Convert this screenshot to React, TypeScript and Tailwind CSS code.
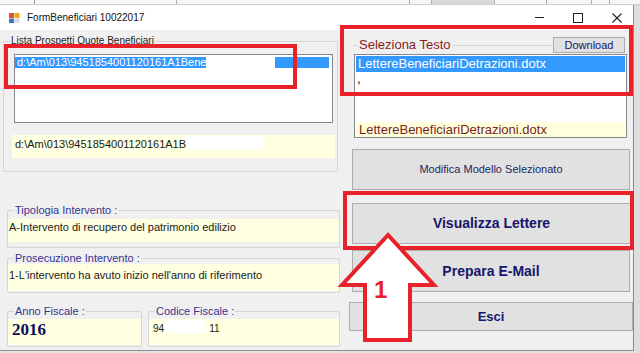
import React from 'react';

// WinForms "FormBeneficiari" window with red annotation overlay

function GroupBox({
  label,
  className,
  labelClass,
  children,
}: {
  label: string;
  className: string;
  labelClass: string;
  children: React.ReactNode;
}) {
  return (
    <fieldset className={`border border-[#d5d5d5] rounded-[2px] ${className}`}>
      <legend className={`ml-[6px] px-[1px] leading-[12px] ${labelClass}`}>{label}</legend>
      {children}
    </fieldset>
  );
}

function WinButton({ className, children }: { className: string; children: React.ReactNode }) {
  return (
    <button
      className={`flex items-center justify-center bg-[#e1e1e1] border border-[#adadad] text-[#16166a] ${className}`}
    >
      {children}
    </button>
  );
}

export default function App() {
  return (
    <div className="relative w-[640px] h-[353px] overflow-hidden bg-[#e4e4e4] font-['Liberation_Sans',Arial,sans-serif]">
      {/* background app strip */}
      <div className="h-[5px] flex bg-[#f6f6f6] border-b border-[#cfcfcf]">
        <div className="w-[35px] border-r border-[#9a9a9a]" />
        <div className="w-[142px] border-r border-[#b0b0b0]" />
        <div className="w-[233px] border-r border-[#b0b0b0]" />
        <div className="w-[22px] border-r border-[#b0b0b0]" />
        <div className="w-[63px] bg-[#dadada] border-r border-[#b0b0b0]" />
        <div className="w-[52px] border-r border-[#b0b0b0]" />
        <div className="w-[45px] border-r border-[#b0b0b0]" />
        <div className="w-[18px] border-r border-[#b0b0b0]" />
      </div>

      <div className="flex">
        <div className="w-[634px] h-[346px] flex flex-col bg-[#f0f0f0] border-r border-b border-[#8c8c8c]">
          {/* title bar */}
          <div className="h-[25px] flex items-center bg-white pl-[9px]">
            <svg width="11" height="10" viewBox="0 0 11 10">
              <rect x="0" y="0" width="5" height="5" fill="#e2522a" />
              <rect x="5.5" y="0" width="5" height="5" fill="#f2a51f" />
              <rect x="0" y="5.5" width="5" height="4.5" fill="#3a76c8" />
              <rect x="5.5" y="5.5" width="5" height="4.5" fill="#d9d9d9" />
            </svg>
            <span className="ml-[7px] text-[10px] text-[#111]">FormBeneficiari 10022017</span>
            <div className="ml-auto flex items-center gap-[29px] pr-[11px]">
              <svg width="9" height="9" viewBox="0 0 9 9">
                <line x1="0" y1="4.5" x2="9" y2="4.5" stroke="#222" strokeWidth="1" />
              </svg>
              <svg width="10" height="10" viewBox="0 0 10 10">
                <rect x="0.5" y="0.5" width="9" height="9" fill="none" stroke="#222" strokeWidth="1" />
              </svg>
              <svg width="10" height="10" viewBox="0 0 10 10">
                <path d="M0.5 0.5 L9.5 9.5 M9.5 0.5 L0.5 9.5" stroke="#222" strokeWidth="1.1" />
              </svg>
            </div>
          </div>

          <div className="flex flex-1">
            {/* left column */}
            <div className="w-[341px] flex flex-col">
              <GroupBox
                label="Lista Prospetti Quote Beneficiari"
                className="ml-[3px] mt-[5px] w-[335px] h-[137px]"
                labelClass="text-[10px] text-[#1e1e1e]"
              >
                <div className="ml-[10px] mt-[7px] w-[319px] h-[69px] border border-[#828790] bg-white pt-[2px]">
                  <div className="flex items-center h-[11px] w-[314px] bg-[#3399ff] text-white text-[11px] leading-[11px] pl-[2px]">
                    <span className="whitespace-nowrap">d:\Am\013\9451854001120161A1Bene</span>
                    <span className="w-[69px] h-[11px] bg-white" />
                  </div>
                </div>
                <div className="ml-[8px] mt-[12px] w-[323px] h-[23px] bg-[#ffffe1] flex items-start pt-[1px] pl-[3px] text-[11px] leading-[13px] text-[#1a1a1a]">
                  <span className="whitespace-nowrap pt-[2px]">d:\Am\013\9451854001120161A1B</span>
                  <span className="w-[78px] h-[13px] bg-white" />
                </div>
              </GroupBox>

              <GroupBox
                label="Tipologia Intervento :"
                className="ml-[7px] mt-[32px] w-[333px] pb-[5px]"
                labelClass="text-[11px] text-[#35358f]"
              >
                <div className="mt-[3px] h-[23px] bg-[#ffffe1] pl-[1px] pt-[2px] text-[11px] leading-[13px] text-[#1a1a1a]">
                  A-Intervento di recupero del patrimonio edilizio
                </div>
              </GroupBox>

              <GroupBox
                label="Prosecuzione Intervento :"
                className="ml-[7px] mt-[4px] w-[333px] pb-[1px]"
                labelClass="text-[11px] text-[#35358f]"
              >
                <div className="h-[27px] bg-[#ffffe1] pl-[1px] pt-[5px] text-[11px] leading-[13px] text-[#1a1a1a]">
                  1-L&apos;intervento ha avuto inizio nell&apos;anno di riferimento
                </div>
              </GroupBox>

              <div className="flex mt-[12px]">
                <GroupBox
                  label="Anno Fiscale :"
                  className="ml-[7px] w-[135px] pb-[1px]"
                  labelClass="text-[11px] text-[#35358f]"
                >
                  <div className="mt-[2px] h-[26px] bg-[#ffffe1] pl-[4px] pt-[1px] text-[17px] leading-[20px] font-bold font-['Liberation_Serif',serif] text-[#0c0c5c]">
                    2016
                  </div>
                </GroupBox>
                <GroupBox
                  label="Codice Fiscale :"
                  className="ml-[6px] w-[192px] pb-[1px]"
                  labelClass="text-[11px] text-[#35358f]"
                >
                  <div className="mt-[2px] h-[26px] bg-[#ffffe1] flex items-start pl-[4px] pt-[1px] text-[10px] leading-[13px] text-[#1a1a1a]">
                    <span className="pt-[2px]">94</span>
                    <span className="ml-[1px] w-[40px] h-[13px] bg-white" />
                    <span className="ml-[4px] pt-[2px]">11</span>
                  </div>
                </GroupBox>
              </div>
            </div>

            {/* right column */}
            <div className="flex-1 flex flex-col">
              <div className="mt-[7px] ml-[12px] mr-[8px] h-[16px] flex items-center">
                <div className="w-[5px] h-px bg-[#d5d5d5]" />
                <span className="px-[1px] text-[13px] leading-[16px] text-[#8a1d1d] whitespace-nowrap">Seleziona Testo</span>
                <div className="flex-1 h-px bg-[#d5d5d5]" />
                <WinButton className="w-[72px] h-[16px] text-[11px] text-[#3b3b92]">Download</WinButton>
              </div>
              <div className="mt-[1px] ml-[13px] w-[273px] h-[84px] border border-[#828790] bg-white flex flex-col">
                <div className="mt-px mx-px h-[16px] bg-[#3399ff] text-white text-[13px] leading-[16px] pl-[2px] whitespace-nowrap">
                  LettereBeneficiariDetrazioni.dotx
                </div>
                <div className="h-[14px] text-[13px] leading-[14px] pl-[2px] text-black">,</div>
                <div className="flex-1" />
                <div className="mx-px h-[15px] bg-[#ffffdc] text-[13px] leading-[15px] pl-[3px] text-[#7a1e1e] whitespace-nowrap">
                  LettereBeneficiariDetrazioni.dotx
                </div>
              </div>
              <WinButton className="mt-[11px] ml-[11px] w-[278px] h-[41px] text-[11px] text-[#25255e]">
                Modifica Modello Selezionato
              </WinButton>
              <WinButton className="mt-[13px] ml-[11px] w-[279px] h-[41px] text-[14px] font-bold">
                Visualizza Lettere
              </WinButton>
              <WinButton className="mt-[6px] ml-[11px] w-[278px] h-[42px] text-[14px] font-bold">
                Prepara E-Mail
              </WinButton>
              <WinButton className="mt-[10px] ml-[8px] w-[284px] h-[29px] text-[13px] font-bold">
                Esci
              </WinButton>
            </div>
          </div>
        </div>
        <div className="flex-1 h-[348px] bg-[#dedede]" />
      </div>

      {/* annotation overlay */}
      <svg className="absolute left-0 top-0 pointer-events-none" width="640" height="353" viewBox="0 0 640 353">
        <rect x="6" y="46" width="289" height="41" fill="none" stroke="#e8212b" strokeWidth="4" />
        <rect x="342" y="27" width="289" height="67" fill="none" stroke="#e8212b" strokeWidth="4" />
        <rect x="345" y="193" width="287" height="55" fill="none" stroke="#e8212b" strokeWidth="4" />
        <polygon
          points="388,235 342,285 365,285 365,340 410,340 410,285 434,285"
          fill="#ffffff"
          stroke="#e8212b"
          strokeWidth="4"
          strokeLinejoin="miter"
        />
      </svg>
      <div className="absolute left-[374px] top-[278px] text-[24px] leading-[24px] font-bold text-[#e8212b]">1</div>
    </div>
  );
}
